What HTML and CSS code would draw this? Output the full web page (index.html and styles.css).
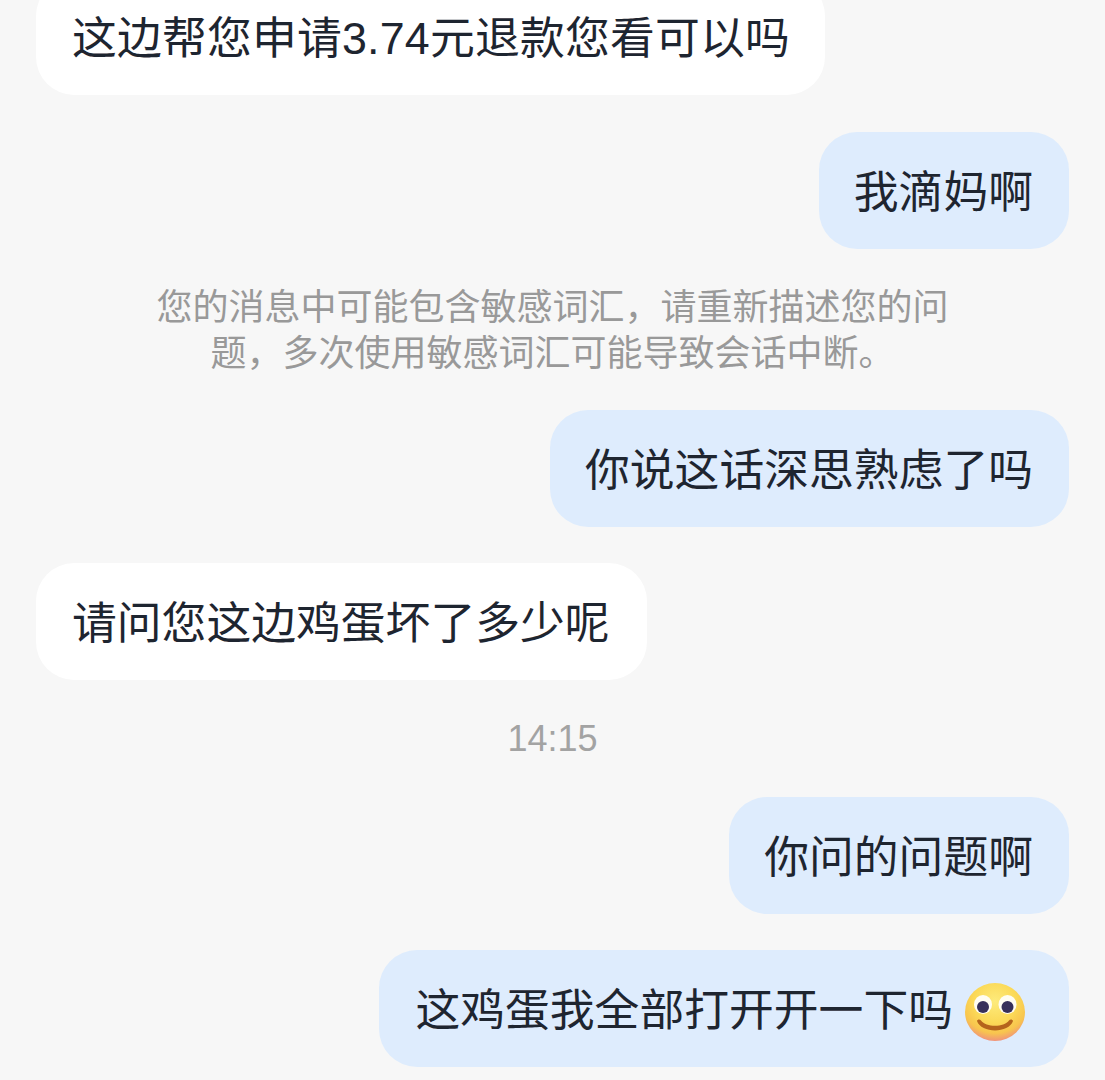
FILE: index.html
```html
<!DOCTYPE html>
<html lang="zh-CN">
<head>
    <meta charset="UTF-8">
    <meta name="viewport" content="width=device-width, initial-scale=1.0">
    <title>Chat</title>
    <link rel="stylesheet" href="styles.css">
</head>
<body>
    <div class="chat">
        <div class="bubble bubble-in first">这边帮您申请3.74元退款您看可以吗</div>
        <div class="bubble bubble-out">我滴妈啊</div>
        <div class="notice">您的消息中可能包含敏感词汇，请重新描述您的问题，多次使用敏感词汇可能导致会话中断。</div>
        <div class="bubble bubble-out">你说这话深思熟虑了吗</div>
        <div class="bubble bubble-in">请问您这边鸡蛋坏了多少呢</div>
        <div class="time">14:15</div>
        <div class="bubble bubble-out">你问的问题啊</div>
        <div class="bubble bubble-out with-emoji">
            <span>这鸡蛋我全部打开开一下吗</span>
            <svg class="emoji" viewBox="0 0 60 58" preserveAspectRatio="none" aria-label="smile">
                <defs>
                    <radialGradient id="face" cx="50%" cy="32%" r="72%">
                        <stop offset="0%" stop-color="#fdeb7c"/>
                        <stop offset="50%" stop-color="#fbd957"/>
                        <stop offset="76%" stop-color="#f8c44e"/>
                        <stop offset="100%" stop-color="#ee8588"/>
                    </radialGradient>
                </defs>
                <ellipse cx="30" cy="29" rx="30" ry="29" fill="url(#face)"/>
                <ellipse cx="18" cy="21.500" rx="9" ry="9.500" fill="#fffdf2"/>
                <ellipse cx="42.500" cy="21.500" rx="9" ry="9.500" fill="#fffdf2"/>
                <circle cx="18" cy="24" r="6" fill="#37305a"/>
                <circle cx="42.500" cy="24" r="6" fill="#37305a"/>
                <path d="M12 38C12.500 36 15 36 16 37.500C21 44.500 39 44.500 44 37.500C45 36 47.500 36 48 38C44 50.500 16 50.500 12 38Z" fill="#b5641c"/>
            </svg>
        </div>
    </div>
</body>
</html>
```

FILE: styles.css
```css
body {
    margin: 0;
    height: 1080px;
    overflow: hidden;
    background-color: #f7f7f7;
    font-family: "Liberation Sans", "Noto Sans CJK SC", sans-serif;
}

.chat {
    display: flex;
    flex-direction: column;
    padding: 0 36px;
}

.bubble {
    box-sizing: border-box;
    height: 117px;
    padding: 4px 36px 0;
    border-radius: 38px;
    font-size: 44.800px;
    line-height: 113px;
    color: #1e2530;
    white-space: nowrap;
}

.bubble-in {
    align-self: flex-start;
    padding-right: 37px;
    background-color: #ffffff;
}

.bubble-out {
    align-self: flex-end;
    margin-top: 37px;
    padding-left: 35px;
    background-color: #deecfd;
}

.first {
    margin-top: -22px;
    padding-right: 35px;
    letter-spacing: 0.200px;
}

.notice {
    width: 800px;
    margin: 36px auto 0;
    font-size: 36px;
    line-height: 46px;
    color: #999999;
    text-align: center;
}

.notice + .bubble-out {
    margin-top: 33px;
}

.bubble-out + .bubble-in {
    margin-top: 36px;
}

.time {
    margin-top: 39px;
    font-size: 36px;
    line-height: 40px;
    color: #a3a3a3;
    text-align: center;
}

.time + .bubble-out {
    margin-top: 38px;
}

.time + .bubble-out + .bubble-out {
    margin-top: 36px;
}

.with-emoji {
    display: flex;
    align-items: center;
    gap: 12px;
    padding-left: 36px;
    padding-right: 44px;
}

.emoji {
    width: 60px;
    height: 58px;
    margin-top: 3px;
}
```
